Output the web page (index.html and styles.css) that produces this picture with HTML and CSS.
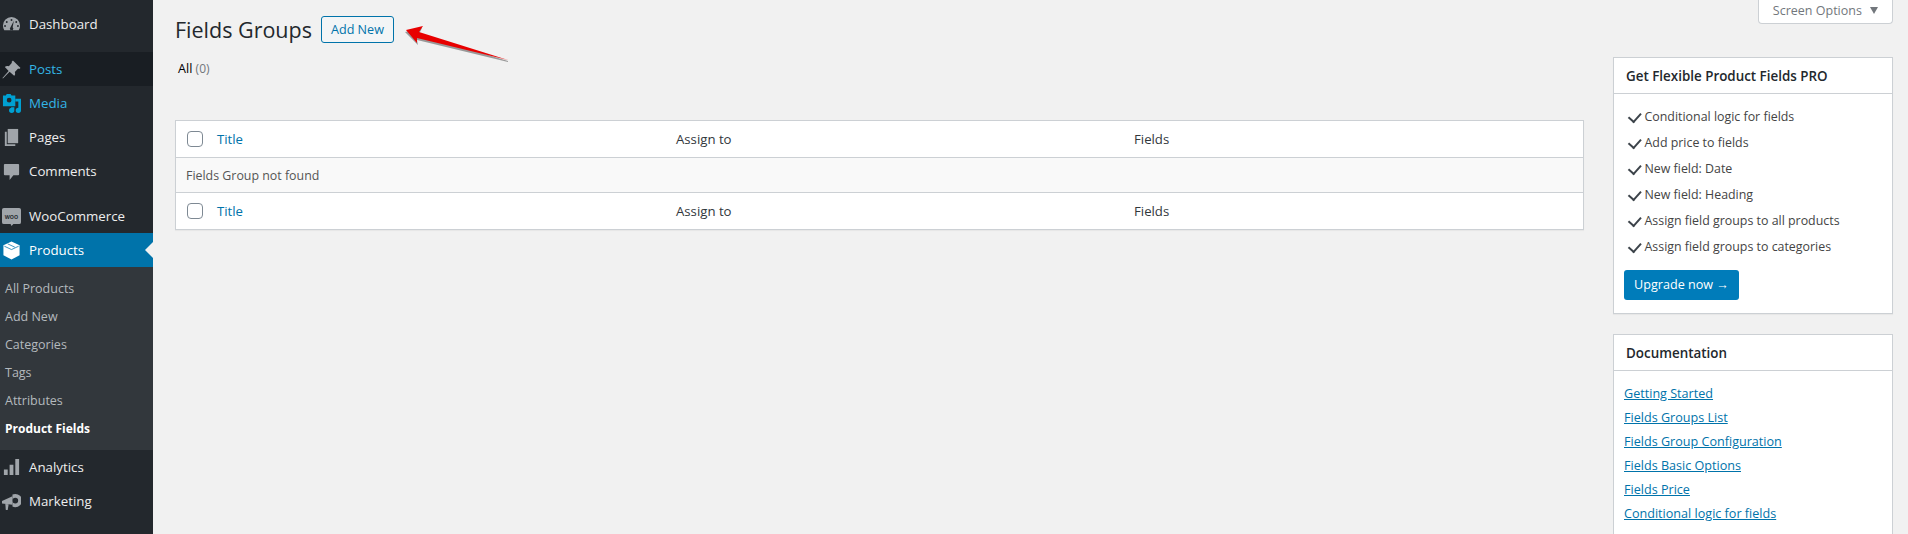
FILE: index.html
```html
<!DOCTYPE html>
<html lang="en">
<head>
<meta charset="utf-8">
<title>Fields Groups</title>
<link rel="stylesheet" href="styles.css">
</head>
<body>
<div class="shell">
  <nav class="sidebar">
    <ul class="menu menu-dash">
      <li class="item"><svg class="ico" viewBox="0 0 20 20"><path fill-rule="evenodd" d="M10 2a9 9 0 0 0-9 9c0 1.800.5 3.500 1.400 5h15.200A9 9 0 0 0 19 11a9 9 0 0 0-9-9zm0 2.200a1 1 0 1 1 0 2 1 1 0 0 1 0-2zM5 6.300a1 1 0 1 1 0 2 1 1 0 0 1 0-2zm10 0a1 1 0 1 1 0 2 1 1 0 0 1 0-2zM3.200 10.500a1 1 0 1 1 0 2 1 1 0 0 1 0-2zm13.600 0a1 1 0 1 1 0 2 1 1 0 0 1 0-2zM12.500 6l-1.300 7a1.800 1.800 0 1 1-2.400.2z"/></svg><span>Dashboard</span></li>
    </ul>
    <ul class="menu">
      <li class="item item-dark item-cyan"><svg class="ico" viewBox="0 0 20 20"><path d="M11.500 .5l8 8-1.500 1-1-.5-3.500 3.500c.7 2 .2 3.300-.7 4.200L8 12.400l-7 7-.5-.5 6.500-7.400-4-4.200c1-.9 2.500-1.300 4.200-.7L10.500 3l-.5-1z"/></svg><span>Posts</span></li>
      <li class="item item-cyan"><svg class="ico ico-cyan" viewBox="0 0 20 20"><path fill-rule="evenodd" d="M1 1.500h3L5 0h4l1 1.500h4v11.500H1zM7.500 4a2.500 2.500 0 1 0 0 5 2.500 2.500 0 0 0 0-5z"/><path d="M14 5h6v12.200a2.800 2.800 0 1 1-2.800-2.800V8H14zM9.500 14H13v3.200a2.800 2.800 0 1 1-2.800-2.800h-.7z"/></svg><span>Media</span></li>
      <li class="item"><svg class="ico" viewBox="0 0 20 20"><path d="M6 1h11v15H6z"/><path d="M3 4h2v13h9v2H3z"/></svg><span>Pages</span></li>
      <li class="item"><svg class="ico" viewBox="0 0 20 20"><path d="M3 2h14a1 1 0 0 1 1 1v10a1 1 0 0 1-1 1h-5l-4 5v-5H3a1 1 0 0 1-1-1V3a1 1 0 0 1 1-1z"/></svg><span>Comments</span></li>
    </ul>
    <ul class="menu menu-woo">
      <li class="item"><svg class="ico ico-woo" viewBox="0 0 20 20"><path d="M2 1h16a2 2 0 0 1 2 2v13a2 2 0 0 1-2 2h-6l-2 2-1-2H2a2 2 0 0 1-2-2V3a2 2 0 0 1 2-2z"/><text class="woo-text" x="10" y="12.500">WOO</text></svg><span>WooCommerce</span></li>
      <li class="item item-current"><svg class="ico ico-white" viewBox="0 0 20 20"><path d="M10 .5l8.500 4v10.500L10 19.500 1.500 15V4.500z"/><path class="box-line" d="M2.500 5.500L10 9l7.500-3.500M6 3l7.500 3.500"/></svg><span>Products</span></li>
    </ul>
    <ul class="submenu">
      <li>All Products</li>
      <li>Add New</li>
      <li>Categories</li>
      <li>Tags</li>
      <li>Attributes</li>
      <li class="sub-current">Product Fields</li>
    </ul>
    <ul class="menu menu-last">
      <li class="item"><svg class="ico" viewBox="0 0 20 20"><path d="M2 12h4v6H2zM8 7h4v11H8zM14 1h4v17h-4z"/></svg><span>Analytics</span></li>
      <li class="item"><svg class="ico" viewBox="0 0 20 20"><path d="M0 9.500L11 4.500v9L0 12z"/><path d="M3.500 12.500l3.500.5-1 6H4z"/><path fill-rule="evenodd" d="M14 2a7 7 0 1 1 0 14 7 7 0 0 1-3-.7V2.700A7 7 0 0 1 14 2zm0 4a3 3 0 1 0 0 6 3 3 0 0 0 0-6z"/></svg><span>Marketing</span></li>
    </ul>
  </nav>

  <main class="content">
    <div class="screen-bar">
      <button class="screen-options" type="button">Screen Options <i class="caret"></i></button>
    </div>
    <div class="wrap">
      <div class="primary">
        <div class="title-row">
          <h1>Fields Groups</h1>
          <a class="add-new">Add New</a>
          <svg class="arrow" viewBox="0 0 110 40" aria-hidden="true">
            <path class="arrow-shadow" d="M0 7L17 3 14 9 103 36 103 37 12 15 13 20z"/>
            <path class="arrow-body" d="M1 5L18 1 14 7 103 35 12 13 12 18z"/>
          </svg>
        </div>
        <p class="subsub"><strong>All</strong> <span>(0)</span></p>
        <table class="list">
          <thead>
            <tr><th class="cb"><i class="check"></i></th><th class="col-title"><a>Title</a></th><th>Assign to</th><th>Fields</th></tr>
          </thead>
          <tbody>
            <tr class="empty"><td colspan="4">Fields Group not found</td></tr>
          </tbody>
          <tfoot>
            <tr><th class="cb"><i class="check"></i></th><th class="col-title"><a>Title</a></th><th>Assign to</th><th>Fields</th></tr>
          </tfoot>
        </table>
      </div>
      <aside class="side">
        <section class="box">
          <h2>Get Flexible Product Fields PRO</h2>
          <div class="box-body">
            <ul class="checks">
              <li>Conditional logic for fields</li>
              <li>Add price to fields</li>
              <li>New field: Date</li>
              <li>New field: Heading</li>
              <li>Assign field groups to all products</li>
              <li>Assign field groups to categories</li>
            </ul>
            <a class="upgrade">Upgrade now <span class="upgrade-arrow">→</span></a>
          </div>
        </section>
        <section class="box box-cut">
          <h2>Documentation</h2>
          <ul class="docs">
            <li><a>Getting Started</a></li>
            <li><a>Fields Groups List</a></li>
            <li><a>Fields Group Configuration</a></li>
            <li><a>Fields Basic Options</a></li>
            <li><a>Fields Price</a></li>
            <li><a>Conditional logic for fields</a></li>
          </ul>
        </section>
      </aside>
    </div>
  </main>
</div>
</body>
</html>
```

FILE: styles.css
```css
* { box-sizing: border-box; }
html, body { margin: 0; height: 534px; overflow: hidden; }
body { background: #f1f1f1; color: #444; font: 13px/18px "Open Sans", "Noto Sans", sans-serif; }
ul { list-style: none; margin: 0; padding: 0; }
a { color: #0073aa; }

.shell { display: flex; height: 534px; }

/* sidebar */
.sidebar { width: 153px; flex: none; background: #23282d; color: #eee; }
.menu-dash { padding-top: 7px; height: 52px; }
.menu-woo { margin-top: 11px; }
.menu-last { padding-top: 0; }
.item { position: relative; display: flex; align-items: center; height: 34px; gap: 8px; padding-left: 2px; font-size: 13.300px; color: #eee; }
.item-dark { background: #191e23; }
.item-cyan { color: #33b5e5; }
.item-current { background: #0073aa; color: #fff; }
.item-current::after { content: ""; position: absolute; right: 0; top: 9px; border: 8px solid transparent; border-right-color: #f1f1f1; border-left-width: 0; }
.ico { width: 19px; height: 19px; flex: none; fill: #a0a5aa; }
.ico-cyan { fill: #00a0d2; }
.ico-white { fill: #fff; }
.box-line { fill: none; stroke: #0073aa; stroke-width: .8; }
.woo-text { fill: #23282d; font-size: 5.500px; font-weight: 700; text-anchor: middle; }
.submenu { background: #32373c; padding: 8px 0 0; height: 183px; }
.submenu li { height: 28px; line-height: 28px; padding-left: 5px; font-size: 12.500px; color: #b4b9be; }
.submenu .sub-current { color: #fff; font-weight: 700; font-size: 12px; }

/* main column */
.content { flex: 1; min-width: 0; }
.screen-bar { height: 0; display: flex; justify-content: flex-end; padding-right: 15px; }
.screen-options { flex: none; width: 135px; height: 24px; margin: 0; padding: 0 0 1px; background: #fff; border: 1px solid #ccd0d4; border-top: 0; border-radius: 0 0 4px 4px; color: #72777c; font: 12.500px/18px "Open Sans", sans-serif; }
.caret { display: inline-block; margin-left: 5px; vertical-align: 1px; border: 4px solid transparent; border-top: 7px solid #72777c; border-bottom: 0; }
.wrap { display: flex; gap: 29px; padding: 16px 15px 0 22px; }
.primary { width: 1409px; flex: none; }
.side { width: 280px; flex: none; padding-top: 41px; }

/* header */
.title-row { position: relative; display: flex; align-items: center; height: 27px; gap: 9px; }
h1 { margin: 0; font-size: 21.500px; line-height: 27px; font-weight: 400; color: #23282d; }
.add-new { display: block; width: 73px; height: 27px; line-height: 25px; text-align: center; border: 1px solid #0073aa; border-radius: 3px; background: #f3f5f6; font-size: 12.600px; }
.arrow { position: absolute; left: 230px; top: 9px; width: 110px; height: 40px; }
.arrow-body { fill: #e80000; }
.arrow-shadow { fill: #999; }
.subsub { margin: 18px 0 0 3px; height: 16px; line-height: 16px; font-size: 12.600px; color: #72777c; }
.subsub strong { font-weight: 400; color: #000; }
.subsub span { font-size: 12px; }

/* table */
.list { width: 100%; margin-top: 43px; border: 1px solid #ccd0d4; border-collapse: separate; border-spacing: 0; background: #fff; table-layout: fixed; box-shadow: 0 1px 1px rgba(0,0,0,.04); }
.list th { height: 36px; padding: 0 0 0 9px; text-align: left; font-weight: 400; font-size: 13.200px; color: #32373c; }
.list th.cb { width: 33px; padding: 0 0 0 11px; }
.list th.col-title { padding-left: 8px; }
.list th a { color: #0073aa; }
.check { display: block; width: 16px; height: 16px; background: #fff; border: 1px solid #7e8993; border-radius: 4px; }
.empty td { height: 36px; padding: 2px 0 0 10px; background: #f9f9f9; border-top: 1px solid #ccd0d4; border-bottom: 1px solid #ccd0d4; font-size: 12.400px; color: #555; }

/* side boxes */
.box { background: #fff; border: 1px solid #ccd0d4; box-shadow: 0 1px 1px rgba(0,0,0,.04); margin-bottom: 20px; }
.box-cut { height: 200px; margin-bottom: 0; border-bottom: 0; box-shadow: none; }
.box h2 { margin: 0; height: 36px; padding-left: 12px; line-height: 36px; font-size: 13.400px; font-weight: 600; color: #23282d; border-bottom: 1px solid #ccd0d4; }
.box-body { padding: 10px 10px 13px; }
.checks li { display: flex; align-items: center; height: 26px; padding-left: 7px; font-size: 12.400px; color: #444; }
.checks li::before { content: ""; width: 5.500px; height: 9.500px; margin: -2px 6px 0 0; flex: none; border: solid #3c434a; border-width: 0 2.500px 2.500px 0; transform: rotate(42deg); }
.upgrade { display: block; width: 115px; height: 30px; margin-top: 10px; line-height: 30px; text-align: center; background: #007cba; color: #fff; border-radius: 3px; font-size: 12.600px; }
.upgrade-arrow { font-family: "Liberation Sans", sans-serif; }
.docs { padding: 11px 10px 0; }
.docs li { height: 24px; line-height: 24px; font-size: 12.600px; }
.docs a { text-decoration: underline; color: #0073aa; }
```
